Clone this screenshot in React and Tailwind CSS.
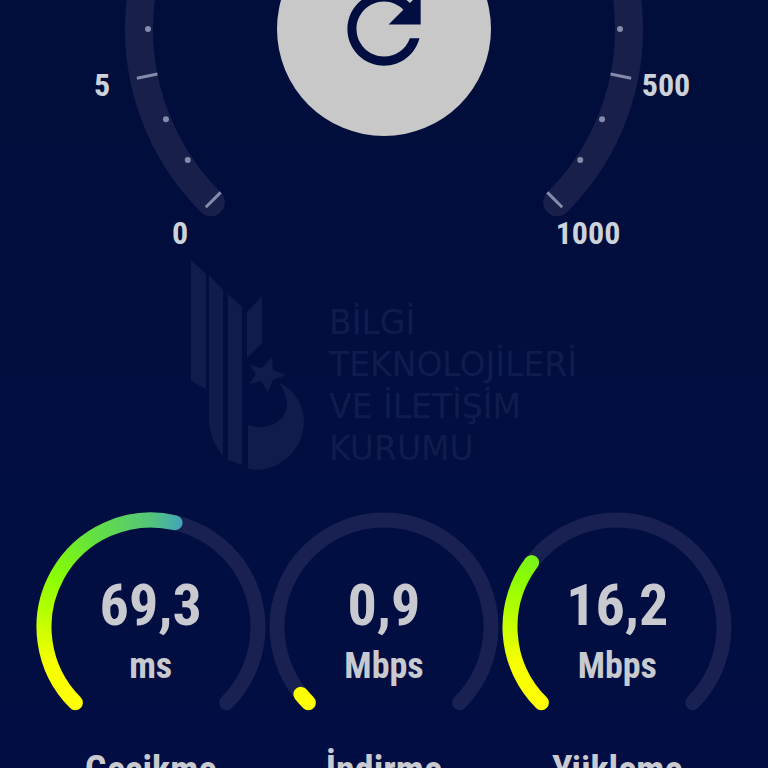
import { useId } from 'react';
import { MdRefresh } from 'react-icons/md';

const point = (cx, cy, r, deg) => {
  const a = (deg * Math.PI) / 180;
  return [cx + r * Math.cos(a), cy + r * Math.sin(a)];
};

// angles are clockwise, 135 is the bottom left end of a dial
const arc = (cx, cy, r, from, to) => {
  const [x1, y1] = point(cx, cy, r, from);
  const [x2, y2] = point(cx, cy, r, to);
  return `M${x1} ${y1}A${r} ${r} 0 ${to - from > 180 ? 1 : 0} 1 ${x2} ${y2}`;
};

const stops = [
  [0, [255, 255, 0]],
  [25, [246, 255, 0]],
  [70, [140, 255, 0]],
  [100, [100, 226, 62]],
  [135, [84, 196, 125]],
  [150, [66, 166, 184]],
  [270, [40, 110, 220]],
];

const colorAt = (sweep) => {
  const s = Math.max(0, sweep);
  const i = Math.max(1, stops.findIndex(([stop]) => stop >= s));
  const [s0, c0] = stops[i - 1];
  const [s1, c1] = stops[i];
  const t = (s - s0) / (s1 - s0);
  return `rgb(${c0.map((c, k) => Math.round(c + (c1[k] - c) * t)).join(',')})`;
};

const results = [
  { label: 'Gecikme', value: '69,3', unit: 'ms', sweep: 148 },
  { label: 'İndirme', value: '0,9', unit: 'Mbps', sweep: 6 },
  { label: 'Yükleme', value: '16,2', unit: 'Mbps', sweep: 82 },
];

function SpeedDial() {
  const ticks = Array.from({ length: 25 }, (_, i) => i);
  return (
    <div className="relative flex h-[260px] justify-center overflow-hidden">
      <svg width="640" height="260" viewBox="0 0 640 260" className="shrink-0">
        <path d={arc(320, 29, 245, 135, 405)} fill="none" stroke="#191f4b" strokeWidth="28" strokeLinecap="round" />
        {ticks.map((i) => {
          const deg = 135 + i * 11.25;
          if (i % 3 === 0) {
            const [x1, y1] = point(320, 29, 231, deg);
            const [x2, y2] = point(320, 29, 252, deg);
            return <line key={i} x1={x1} y1={y1} x2={x2} y2={y2} stroke="#858bab" strokeWidth="3" />;
          }
          const [cx, cy] = point(320, 29, 236, deg);
          return <circle key={i} cx={cx} cy={cy} r="3" fill="#858bab" />;
        })}
        <g fill="#cdd3da" fontSize="32" textAnchor="middle">
          <text x="38" y="96">5</text>
          <text x="116" y="244">0</text>
          <text x="602" y="96">500</text>
          <text x="524" y="244">1000</text>
        </g>
      </svg>
      <button
        type="button"
        aria-label="Yenile"
        className="absolute -top-[78px] left-1/2 flex size-[214px] -translate-x-1/2 items-center justify-center rounded-full bg-[#c8c8c8] text-[#010e3f]"
      >
        <MdRefresh size={110} />
      </button>
    </div>
  );
}

function Watermark() {
  return (
    <div className="flex items-end justify-center gap-6 text-[#111c4e]">
      <svg width="114" height="210" viewBox="192 260 114 210" fill="#101c4b" className="shrink-0">
        <path d="M192 260L207 274V389L192 381Z" />
        <path d="M210 275L224 290V456C215 445 210 433 210 418Z" />
        <path d="M229 294L243 307V465L229 460Z" />
        <path d="M248 312L263 296V343L248 358Z" />
        <path d="M273 357L274 370L287 375L274 380L269 392L262 381L250 384L257 374L251 365L263 368Z" />
        <path d="M280 383C297 391 305 406 305 422C305 448 283 470 256 470L249 469V425C262 429 276 427 284 416C291 406 288 394 280 383Z" />
      </svg>
      <p className="font-['DejaVu_Sans',sans-serif] text-[33px] font-normal leading-[42px]">
        BİLGİ
        <br />
        TEKNOLOJİLERİ
        <br />
        VE İLETİŞİM
        <br />
        KURUMU
      </p>
    </div>
  );
}

function ResultGauge({ label, value, unit, sweep }) {
  const maskId = useId();
  // runs a little past both ends so the round caps are coloured too
  const steps = Array.from({ length: Math.ceil(sweep / 2) + 6 }, (_, i) => i * 2 - 6);
  return (
    <div className="flex flex-col items-center">
      <div className="grid justify-items-center">
        <svg width="230" height="230" viewBox="0 0 230 230" fill="none" className="col-start-1 row-start-1">
          <mask id={maskId} maskUnits="userSpaceOnUse" x="0" y="0" width="230" height="230">
            <path d={arc(115, 115, 107, 135, 135 + sweep)} stroke="#fff" strokeWidth="15" strokeLinecap="round" />
          </mask>
          <path d={arc(115, 115, 107, 135, 405)} stroke="#182151" strokeWidth="15" strokeLinecap="round" />
          <g mask={`url(#${maskId})`}>
            {steps.map((s) => (
              <path key={s} d={arc(115, 115, 107, 135 + s, 138 + s)} stroke={colorAt(s)} strokeWidth="20" />
            ))}
          </g>
        </svg>
        <div className="col-start-1 row-start-1 flex flex-col items-center gap-3.5 pt-16">
          <span className="text-[58px] leading-[58px]">{value}</span>
          <span className="text-[36px] leading-9">{unit}</span>
        </div>
      </div>
      <span className="mt-1.5 text-[38px] leading-[44px]">{label}</span>
    </div>
  );
}

export default function App() {
  return (
    <main className="h-screen overflow-hidden bg-linear-to-b from-[#010e3b] to-[#020e43] font-['Roboto_Condensed','Open_Sans_Condensed',Roboto,sans-serif] font-bold text-[#c9cacf]">
      <SpeedDial />
      <Watermark />
      <section className="mt-[42px] grid grid-cols-3 px-[34px]">
        {results.map((r) => (
          <ResultGauge key={r.label} {...r} />
        ))}
      </section>
    </main>
  );
}
